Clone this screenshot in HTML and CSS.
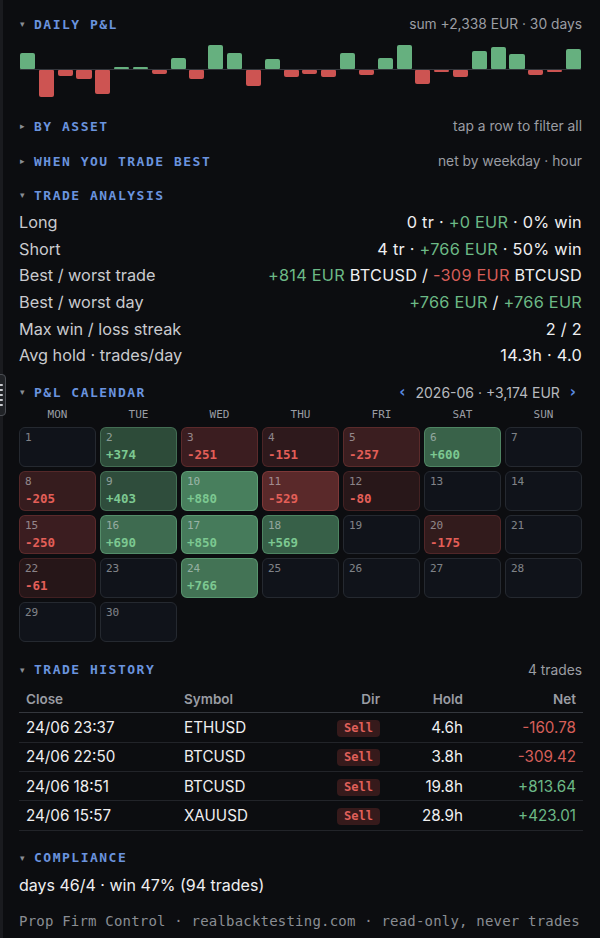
FILE: index.html
```html
<!DOCTYPE html>
<html lang="en">
<head>
<meta charset="utf-8">
<title>Prop Firm Control</title>
<link rel="stylesheet" href="styles.css">
</head>
<body>
<div class="grip" aria-hidden="true"><span></span><span></span><span></span><span></span><span></span></div>
<main class="panel">

  <section class="sec sec-daily">
    <header class="sec-head"><span class="caret">▾</span><h2>DAILY P&amp;L</h2><span class="meta">sum +2,338 EUR · 30 days</span></header>
    <div class="bars">
      <span class="day"><i class="bar up" style="height:16px"></i></span>
      <span class="day"><i class="bar dn" style="height:27px"></i></span>
      <span class="day"><i class="bar dn" style="height:6px"></i></span>
      <span class="day"><i class="bar dn" style="height:9px"></i></span>
      <span class="day"><i class="bar dn" style="height:24px"></i></span>
      <span class="day"><i class="bar up" style="height:2px"></i></span>
      <span class="day"><i class="bar up" style="height:2px"></i></span>
      <span class="day"><i class="bar dn" style="height:4px"></i></span>
      <span class="day"><i class="bar up" style="height:11px"></i></span>
      <span class="day"><i class="bar dn" style="height:9px"></i></span>
      <span class="day"><i class="bar up" style="height:24px"></i></span>
      <span class="day"><i class="bar up" style="height:16px"></i></span>
      <span class="day"><i class="bar dn" style="height:16px"></i></span>
      <span class="day"><i class="bar up" style="height:10px"></i></span>
      <span class="day"><i class="bar dn" style="height:7px"></i></span>
      <span class="day"><i class="bar dn" style="height:4px"></i></span>
      <span class="day"><i class="bar dn" style="height:7px"></i></span>
      <span class="day"><i class="bar up" style="height:16px"></i></span>
      <span class="day"><i class="bar dn" style="height:5px"></i></span>
      <span class="day"><i class="bar up" style="height:11px"></i></span>
      <span class="day"><i class="bar up" style="height:24px"></i></span>
      <span class="day"><i class="bar dn" style="height:14px"></i></span>
      <span class="day"><i class="bar dn" style="height:2px"></i></span>
      <span class="day"><i class="bar dn" style="height:7px"></i></span>
      <span class="day"><i class="bar up" style="height:18px"></i></span>
      <span class="day"><i class="bar up" style="height:22px"></i></span>
      <span class="day"><i class="bar up" style="height:15px"></i></span>
      <span class="day"><i class="bar dn" style="height:5px"></i></span>
      <span class="day"><i class="bar dn" style="height:2px"></i></span>
      <span class="day"><i class="bar up" style="height:20px"></i></span>
    </div>
  </section>

  <section class="sec sec-asset">
    <header class="sec-head"><span class="caret">▸</span><h2>BY ASSET</h2><span class="meta">tap a row to filter all</span></header>
  </section>

  <section class="sec sec-when">
    <header class="sec-head"><span class="caret">▸</span><h2>WHEN YOU TRADE BEST</h2><span class="meta">net by weekday · hour</span></header>
  </section>

  <section class="sec sec-analysis">
    <header class="sec-head"><span class="caret">▾</span><h2>TRADE ANALYSIS</h2></header>
    <dl class="stats">
      <div class="stat"><dt>Long</dt><dd>0 tr · <span class="pos">+0 EUR</span> · 0% win</dd></div>
      <div class="stat"><dt>Short</dt><dd>4 tr · <span class="pos">+766 EUR</span> · 50% win</dd></div>
      <div class="stat"><dt>Best / worst trade</dt><dd><span class="pos">+814 EUR</span> BTCUSD / <span class="neg">-309 EUR</span> BTCUSD</dd></div>
      <div class="stat"><dt>Best / worst day</dt><dd><span class="pos">+766 EUR</span> / <span class="pos">+766 EUR</span></dd></div>
      <div class="stat"><dt>Max win / loss streak</dt><dd>2 / 2</dd></div>
      <div class="stat"><dt>Avg hold · trades/day</dt><dd>14.3h · 4.0</dd></div>
    </dl>
  </section>

  <section class="sec sec-cal">
    <header class="sec-head"><span class="caret">▾</span><h2>P&amp;L CALENDAR</h2>
      <span class="cal-nav"><span class="chev">‹</span><span>2026-06 · +3,174 EUR</span><span class="chev">›</span></span>
    </header>
    <div class="weekdays"><span>MON</span><span>TUE</span><span>WED</span><span>THU</span><span>FRI</span><span>SAT</span><span>SUN</span></div>
    <div class="cal">
      <div class="cell"><span class="d">1</span></div>
      <div class="cell win" style="--a:.38"><span class="d">2</span><span class="v">+374</span></div>
      <div class="cell loss" style="--a:.24"><span class="d">3</span><span class="v">-251</span></div>
      <div class="cell loss" style="--a:.18"><span class="d">4</span><span class="v">-151</span></div>
      <div class="cell loss" style="--a:.245"><span class="d">5</span><span class="v">-257</span></div>
      <div class="cell win" style="--a:.52"><span class="d">6</span><span class="v">+600</span></div>
      <div class="cell"><span class="d">7</span></div>

      <div class="cell loss" style="--a:.215"><span class="d">8</span><span class="v">-205</span></div>
      <div class="cell win" style="--a:.40"><span class="d">9</span><span class="v">+403</span></div>
      <div class="cell win" style="--a:.70"><span class="d">10</span><span class="v">+880</span></div>
      <div class="cell loss" style="--a:.40"><span class="d">11</span><span class="v">-529</span></div>
      <div class="cell loss" style="--a:.145"><span class="d">12</span><span class="v">-80</span></div>
      <div class="cell"><span class="d">13</span></div>
      <div class="cell"><span class="d">14</span></div>

      <div class="cell loss" style="--a:.24"><span class="d">15</span><span class="v">-250</span></div>
      <div class="cell win" style="--a:.58"><span class="d">16</span><span class="v">+690</span></div>
      <div class="cell win" style="--a:.68"><span class="d">17</span><span class="v">+850</span></div>
      <div class="cell win" style="--a:.51"><span class="d">18</span><span class="v">+569</span></div>
      <div class="cell"><span class="d">19</span></div>
      <div class="cell loss" style="--a:.20"><span class="d">20</span><span class="v">-175</span></div>
      <div class="cell"><span class="d">21</span></div>

      <div class="cell loss" style="--a:.135"><span class="d">22</span><span class="v">-61</span></div>
      <div class="cell"><span class="d">23</span></div>
      <div class="cell win" style="--a:.63"><span class="d">24</span><span class="v">+766</span></div>
      <div class="cell"><span class="d">25</span></div>
      <div class="cell"><span class="d">26</span></div>
      <div class="cell"><span class="d">27</span></div>
      <div class="cell"><span class="d">28</span></div>

      <div class="cell"><span class="d">29</span></div>
      <div class="cell"><span class="d">30</span></div>
    </div>
  </section>

  <section class="sec sec-history">
    <header class="sec-head"><span class="caret">▾</span><h2>TRADE HISTORY</h2><span class="meta">4 trades</span></header>
    <table class="trades">
      <colgroup><col class="c-close"><col class="c-sym"><col class="c-dir"><col class="c-hold"><col class="c-net"></colgroup>
      <thead>
        <tr><th>Close</th><th>Symbol</th><th class="r">Dir</th><th class="r">Hold</th><th class="r">Net</th></tr>
      </thead>
      <tbody>
        <tr><td>24/06 23:37</td><td>ETHUSD</td><td class="r"><span class="badge">Sell</span></td><td class="r">4.6h</td><td class="r neg">-160.78</td></tr>
        <tr><td>24/06 22:50</td><td>BTCUSD</td><td class="r"><span class="badge">Sell</span></td><td class="r">3.8h</td><td class="r neg">-309.42</td></tr>
        <tr><td>24/06 18:51</td><td>BTCUSD</td><td class="r"><span class="badge">Sell</span></td><td class="r">19.8h</td><td class="r pos">+813.64</td></tr>
        <tr><td>24/06 15:57</td><td>XAUUSD</td><td class="r"><span class="badge">Sell</span></td><td class="r">28.9h</td><td class="r pos">+423.01</td></tr>
      </tbody>
    </table>
  </section>

  <section class="sec sec-compliance">
    <header class="sec-head"><span class="caret">▾</span><h2>COMPLIANCE</h2></header>
    <p class="compliance">days 46/4 · win 47% (94 trades)</p>
  </section>

  <footer class="foot">Prop Firm Control · realbacktesting.com · read-only, never trades</footer>
</main>
</body>
</html>
```

FILE: styles.css
```css
* {
  box-sizing: border-box;
  margin: 0;
  padding: 0;
}

html,
body {
  background: #0c0d10;
}

body {
  width: 600px;
  height: 938px;
  overflow: hidden;
  position: relative;
  font-family: Inter, "Liberation Sans", sans-serif;
  color: #ededee;
}

/* resize grip peeking in from the left edge */
.grip {
  position: absolute;
  left: -6px;
  top: 374px;
  width: 12px;
  height: 42px;
  border-radius: 4px;
  background: #202226;
  border: 1px solid #4a4d53;
  display: flex;
  flex-direction: column;
  justify-content: center;
  align-items: flex-end;
  gap: 3px;
  padding-right: 2px;
}

.grip span {
  display: block;
  width: 5px;
  height: 2px;
  background: #c8cacf;
  border-radius: 1px;
}

.panel {
  border-left: 3px solid #1a1b1f;
  min-height: 938px;
  padding: 14px 18px 0 16px;
}

/* section headers */
.sec-head {
  display: flex;
  align-items: center;
  height: 20px;
}

.caret {
  width: 15px;
  padding-left: 1px;
  font-family: "DejaVu Sans", sans-serif;
  font-size: 9px;
  color: #8a8d94;
}

.sec-head h2 {
  font-family: "DejaVu Sans Mono", monospace;
  font-size: 13px;
  font-weight: bold;
  letter-spacing: 1.5px;
  color: #6a93de;
}

.meta {
  margin-left: auto;
  font-size: 13.8px;
  color: #9b9da3;
}

.pos {
  color: #6cba86;
}

.neg {
  color: #d65d58;
}

/* daily bars */
.bars {
  display: grid;
  grid-template-columns: repeat(30, 1fr);
  column-gap: 3.8px;
  height: 52px;
  margin: 11px 1px 0 1px;
  background: linear-gradient(#34373d, #34373d) no-repeat 0 24px / 100% 1px;
}

.day {
  display: grid;
  grid-template-rows: 24px 28px;
}

.bar {
  display: block;
}

.bar.up {
  grid-row: 1;
  align-self: end;
  background: #66b07f;
  border-radius: 2px 2px 1px 1px;
}

.bar.dn {
  grid-row: 2;
  align-self: start;
  margin-top: 1px;
  background: #cd5452;
  border-radius: 1px 1px 2px 2px;
}

.sec-asset {
  margin-top: 19px;
}

.sec-when {
  margin-top: 15px;
}

.sec-analysis {
  margin-top: 14px;
}

/* analysis rows */
.stats {
  margin-top: 4px;
}

.stat {
  display: flex;
  justify-content: space-between;
  align-items: center;
  height: 26.6px;
  font-size: 16.3px;
}

.stat dt {
  color: #c9cace;
}

.stat dd {
  color: #efeff0;
  letter-spacing: 0.25px;
}

/* calendar */
.sec-cal {
  margin-top: 13.5px;
}

.cal-nav {
  margin-left: auto;
  display: flex;
  align-items: center;
  gap: 10px;
  font-size: 14px;
  color: #b7b9be;
}

.chev {
  font-family: "DejaVu Sans", sans-serif;
  font-size: 15px;
  font-weight: bold;
  color: #5a8ae0;
}

.cal-nav .chev:last-child {
  margin-right: 6px;
}

.weekdays {
  display: grid;
  grid-template-columns: repeat(7, 1fr);
  column-gap: 4px;
  margin-top: 5px;
  font-family: "DejaVu Sans Mono", monospace;
  font-size: 11px;
  line-height: 16px;
  text-align: center;
  color: #9a9da4;
}

.cal {
  display: grid;
  grid-template-columns: repeat(7, 1fr);
  grid-auto-rows: 39.75px;
  gap: 4px;
  margin-top: 4px;
}

.cell {
  border: 1px solid #252930;
  background: #10131a;
  border-radius: 6px;
  padding: 3px 5px;
  font-family: "DejaVu Sans Mono", monospace;
}

.cell.win {
  background: rgba(99, 176, 127, var(--a));
  border-color: rgba(120, 196, 146, calc(var(--a) * 0.5 + 0.1));
}

.cell.loss {
  background: rgba(207, 85, 82, var(--a));
  border-color: rgba(220, 96, 92, calc(var(--a) * 0.5 + 0.08));
}

.cell .d {
  display: block;
  font-size: 11px;
  line-height: 14px;
  color: rgba(225, 228, 233, 0.55);
}

.cell .v {
  display: block;
  margin-top: 2px;
  font-size: 12.5px;
  line-height: 16px;
  font-weight: bold;
}

.cell.win .v {
  color: #7cc891;
}

.cell.loss .v {
  color: #e35f58;
}

/* trade history */
.sec-history {
  margin-top: 18px;
}

.trades {
  width: 100%;
  margin-top: 6px;
  border-collapse: collapse;
  table-layout: fixed;
  font-size: 15.2px;
}

.c-close { width: 158px; }
.c-sym { width: 123px; }
.c-dir { width: 87px; }
.c-hold { width: 83px; }
.c-net { width: 113px; }

.trades th {
  height: 27px;
  padding: 0 7px;
  text-align: left;
  font-size: 13.5px;
  font-weight: 600;
  color: #9a9ca3;
  border-bottom: 1px solid #34373d;
}

.trades td {
  height: 29.3px;
  padding: 0 7px;
  color: #efeff0;
  border-bottom: 1px solid #222429;
}

.trades .r {
  text-align: right;
}

.trades td.neg {
  color: #d65f59;
}

.trades td.pos {
  color: #6cb986;
}

.badge {
  display: inline-block;
  padding: 0 7px;
  border-radius: 4px;
  background: #361a1b;
  color: #e0605a;
  font-family: "DejaVu Sans Mono", monospace;
  font-size: 12px;
  font-weight: bold;
  line-height: 17px;
  vertical-align: middle;
}

/* compliance + footer */
.sec-compliance {
  margin-top: 17px;
}

.compliance {
  margin-top: 6px;
  font-size: 16px;
  line-height: 22px;
  color: #efeff0;
}

.foot {
  margin-top: 16px;
  font-family: "DejaVu Sans Mono", monospace;
  font-size: 14px;
  letter-spacing: 0.2px;
  line-height: 18px;
  color: #8a8d93;
  white-space: nowrap;
}
```
